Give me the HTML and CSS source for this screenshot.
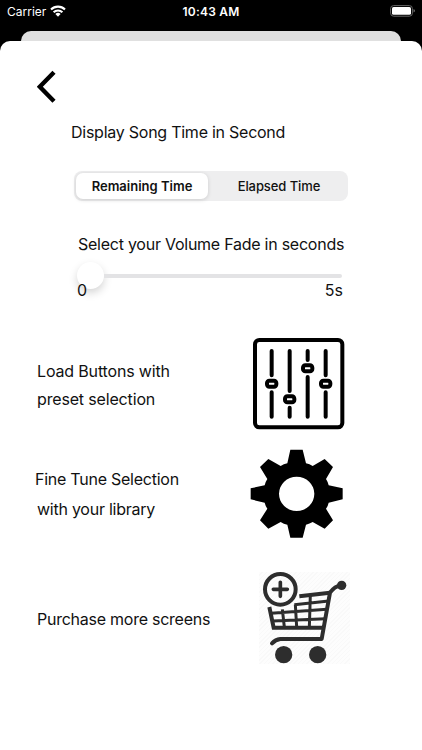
FILE: index.html
```html
<!DOCTYPE html>
<html lang="en">
<head>
  <meta charset="UTF-8" />
  <meta name="viewport" content="width=device-width, initial-scale=1.0" />
  <title>Settings</title>
  <link rel="stylesheet" href="styles.css">
</head>
<body>
  <header class="status-bar">
    <div class="carrier">
      <span>Carrier</span>
      <svg class="wifi" viewBox="0 0 16 12">
        <path d="M1 4.5a10 10 0 0 1 14 0M3.6 7.3a6.2 6.2 0 0 1 8.8 0" fill="none" stroke="#fff" stroke-width="2.1" />
        <path d="M8 11.7L5.4 9.1a3.6 3.6 0 0 1 5.2 0z" fill="#fff" />
      </svg>
    </div>
    <div class="clock">10:43 AM</div>
    <svg class="battery" viewBox="0 0 25 12">
      <rect x=".6" y=".6" width="21.8" height="10.6" rx="3" fill="none" stroke="#666" />
      <rect x="2" y="2" width="19" height="7.8" rx="1.6" fill="#fff" />
      <path d="M23.6 4v3.6q1.2-.6 1.2-1.8T23.6 4" fill="#888" />
    </svg>
  </header>

  <div class="sheet-behind"></div>

  <main class="sheet">
    <button class="back-btn" aria-label="Back">
      <svg viewBox="0 0 20 34"><path d="M17 2.3L2.8 16.7 17 31.2" fill="none" stroke="#000" stroke-width="4.4" /></svg>
    </button>

    <h2 class="time-title">Display Song Time in Second</h2>
    <div class="segmented">
      <button class="segment selected">Remaining Time</button>
      <button class="segment">Elapsed Time</button>
    </div>

    <h2 class="fade-title">Select your Volume Fade in seconds</h2>
    <div class="slider">
      <div class="thumb"></div>
      <div class="track"></div>
    </div>
    <div class="slider-labels"><span>0</span><span>5s</span></div>

    <section class="row load">
      <p><span class="load-first">Load Buttons with</span><span class="load-second">preset selection</span></p>
      <svg class="mixer-icon" viewBox="24 24 276 276">
        <g fill="none" stroke="#000" stroke-width="12" stroke-linecap="round">
          <rect x="30" y="30" width="262" height="262" rx="13" />
          <path d="M80 63v73M80 187v73M134 63v120M134 233v27M188 63v27M188 141v119M242 63v73M242 187v73" />
          <rect x="66" y="152" width="28" height="18" rx="7" />
          <rect x="120" y="199" width="28" height="18" rx="7" />
          <rect x="174" y="106" width="28" height="18" rx="7" />
          <rect x="228" y="152" width="28" height="18" rx="7" />
        </g>
      </svg>
    </section>

    <section class="row tune">
      <p><span class="tune-first">Fine Tune Selection</span><span class="tune-second">with your library</span></p>
      <svg class="gear-icon" viewBox="30 27 279 267">
        <path fill-rule="evenodd" d="M151 29H188L198 70Q209 72 218 78L254 57L279 81L258 117Q264 126 266 136L308 145V178L266 188Q264 198 258 206L279 241L254 266L218 246Q209 251 198 254L188 293H151L142 254Q131 252 122 246L85 266L60 241L82 206Q76 197 74 188L32 178V145L74 136Q76 126 82 117L60 81L85 57L122 78Q131 72 142 70ZM170 110a53 51.5 0 0 0 0 103a53 51.5 0 0 0 0-103z" />
      </svg>
    </section>

    <section class="row purchase">
      <p><span>Purchase more screens</span></p>
      <svg class="cart-icon" viewBox="27 36 273 276">
        <g fill="none" stroke="#2d2d2d">
          <circle cx="91" cy="88" r="46" stroke-width="12" />
          <path d="M91 67v42M70 88h42" stroke-width="11" stroke-linecap="round" />
          <path d="M272 77Q256 76 240 98L215 237H91Q76 239 66 250" stroke-width="12" stroke-linejoin="round" stroke-linecap="round" />
          <path d="M148 109L240 98M58 141L71 203H220" stroke-width="12" />
          <path d="M133 134L236 123M64 160L231 148M68 183L227 176M97 148L103 201M136 134L140 201M181 105L178 201" stroke-width="9" />
        </g>
        <g fill="#2d2d2d">
          <circle cx="275" cy="76" r="14" />
          <circle cx="101" cy="284" r="26" />
          <circle cx="203" cy="284" r="26" />
        </g>
      </svg>
    </section>
  </main>
</body>
</html>
```

FILE: styles.css
```css
* { box-sizing: border-box; }
body {
  margin: 0; height: 750px; background: #000; overflow: hidden;
  font-family: Inter, "Liberation Sans", sans-serif; color: #111;
  display: flex; flex-direction: column;
}
button { border: none; padding: 0; background: none; font-family: inherit; color: inherit; }
svg { display: block; flex: none; }
h2, p { margin: 0; font-weight: 400; letter-spacing: -.25px; }
h2, p, .slider-labels { font-size: 16px; line-height: 20px; white-space: nowrap; }

.status-bar {
  height: 31px; padding: 0 7px 9px; color: #fff; font-size: 12px;
  display: grid; grid-template-columns: 1fr auto 1fr; align-items: center;
}
.carrier { display: flex; align-items: center; gap: 4px; }
.wifi { width: 16px; height: 12px; }
.clock { font-weight: 600; letter-spacing: .2px; }
.battery { width: 25px; height: 12px; justify-self: end; }

.sheet-behind { height: 10px; margin: 0 21px; background: #e0e0e0; border-radius: 10px 10px 0 0; }
.sheet { flex: 1; background: #fff; border-radius: 10px 10px 0 0; padding-top: 29px; }

.back-btn { display: block; width: 20px; height: 34px; margin-left: 37px; }
.time-title { margin: 18px 0 0 71px; }
.segmented {
  width: 274px; height: 30px; margin: 29px 0 0 74px; padding: 2px;
  display: flex; background: #eeeeef; border-radius: 8px;
}
.segment { flex: 1; padding-left: 4px; font-size: 13px; font-weight: 500; letter-spacing: -.08px; border-radius: 7px; }
.segment.selected {
  flex: 0 0 132px; padding: 0; font-weight: 600; letter-spacing: 0;
  background: #fff; box-shadow: 0 1px 4px rgba(0,0,0,0.14);
}

.fade-title { margin: 33px 0 0 78px; }
.slider { width: 265px; height: 27px; margin: 8px 0 0 77px; display: flex; align-items: center; }
.thumb { width: 27px; height: 27px; border-radius: 50%; background: #fff; box-shadow: 0 4px 9px rgba(0,0,0,0.17); }
.track { flex: 1; height: 4px; background: #e3e3e5; border-radius: 0 2px 2px 0; }
.slider-labels { display: flex; justify-content: space-between; width: 266px; margin: -9px 0 0 77px; position: relative; }

.row { display: flex; justify-content: space-between; align-items: flex-start; }
.row p { display: flex; flex-direction: column; }
.load { margin: 38px 77px 0 37px; }
.load p { padding-top: 23px; gap: 8px; letter-spacing: -.16px; }
.mixer-icon { width: 92px; height: 92px; }
.tune { margin: 19px 79px 0 35px; }
.tune p { padding-top: 20px; gap: 10px; }
.tune-second { padding-left: 2px; }
.gear-icon { width: 93px; height: 89px; }
.purchase { margin: 34px 72px 0 37px; }
.purchase p { padding-top: 37px; }
.cart-icon {
  width: 91px; height: 92px;
  background: repeating-linear-gradient(135deg, #fdfdfd 0 2px, #f9f9f9 2px 3px);
}
```
